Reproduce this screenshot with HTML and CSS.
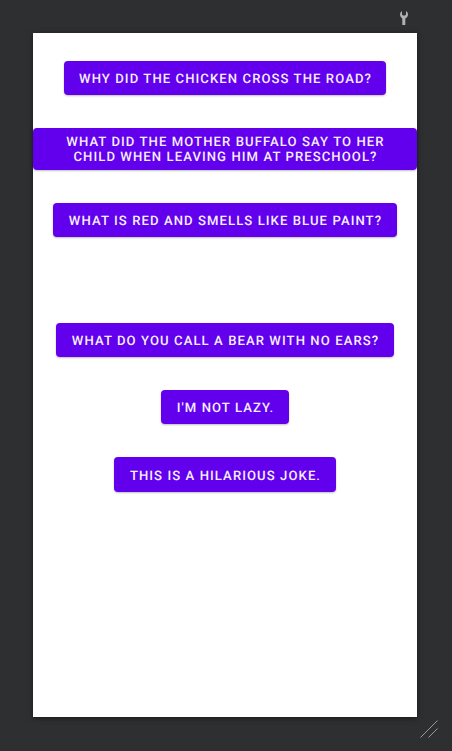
FILE: index.html
```html
<!DOCTYPE html>
<html lang="en">
<head>
<meta charset="utf-8">
<title>Jokes</title>
<link rel="stylesheet" href="styles.css">
</head>
<body>
<header class="toolbar">
<svg class="wrench" width="10" height="16" viewBox="0 0 10 16"><path d="M3 .9A4 4 0 0 0 1 4.600C1 6.400 2 7.700 3.300 8.400V14.900H6.300V8.400C8 7.700 9 6.400 9 4.600A4 4 0 0 0 7 .9V4.500L6 5.500H4L3 4.500Z"/></svg>
</header>
<main class="screen">
<button class="joke">Why did the chicken cross the road?</button>
<button class="joke joke-wide">What did the mother buffalo say to her<br>child when leaving him at preschool?</button>
<button class="joke">What is red and smells like blue paint?</button>
<button class="joke joke-spaced">What do you call a bear with no ears?</button>
<button class="joke">I'm not lazy.</button>
<button class="joke">This is a hilarious joke.</button>
</main>
<footer class="footer">
<svg width="18" height="18" viewBox="0 0 18 18"><path d="M0.500 17.500L17.500 0.500M8.500 17.500L17.500 8.500"/></svg>
</footer>
</body>
</html>
```
FILE: styles.css
```css
* { box-sizing: border-box; }
body {
  margin: 0;
  height: 751px;
  overflow: hidden;
  background: #2d2f31;
  font-family: Roboto, sans-serif;
}
.toolbar {
  display: flex;
  justify-content: flex-end;
  height: 33px;
  padding: 10px 43px 0 0;
}
.wrench { fill: #afb1b3; }
.screen {
  display: flex;
  flex-direction: column;
  align-items: center;
  gap: 33px;
  width: 384px;
  height: 684px;
  margin-left: 33px;
  padding-top: 27.800px;
  background: #fff;
  box-shadow: 0 1px 5px rgba(0, 0, 0, 0.5);
}
.joke {
  height: 34.400px;
  padding: 3px 14.500px 0 15.500px;
  border: 0;
  border-radius: 4px;
  background: #6200ee;
  color: #f6efff;
  font: 500 13.100px/15px Roboto, sans-serif;
  letter-spacing: 1.080px;
  text-rendering: geometricPrecision;
  text-transform: uppercase;
  white-space: nowrap;
  box-shadow: 0 1px 2px rgba(0, 0, 0, 0.25);
}
.joke-wide { width: 100%; height: 41.400px; padding-top: 2px; }
.joke-spaced { margin-top: 52.600px; }
.footer {
  display: flex;
  justify-content: flex-end;
  padding: 3px 14px 0 0;
}
.footer path { fill: none; stroke: #98999a; stroke-width: 1; }
```
